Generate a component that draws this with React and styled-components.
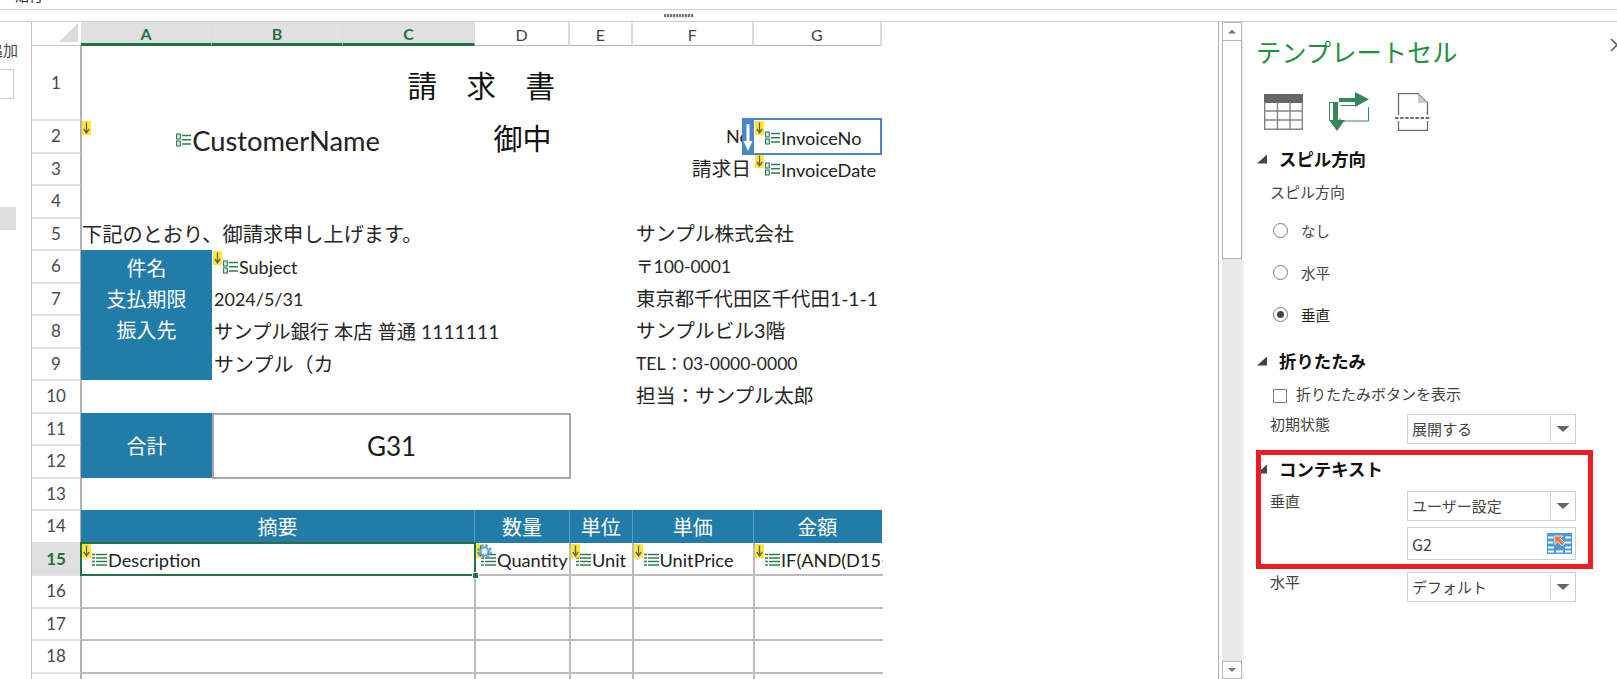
import React from "react";
import styled, { createGlobalStyle, css } from "styled-components";

const SHEET_FONT = `"Lato", "Noto Sans CJK JP", sans-serif`;
const PANEL_FONT = `"Noto Sans CJK JP", "Noto Sans", sans-serif`;
const BLUE = "#227caa";
const GREEN = "#217346";
const GRID = "#bcbcbc";

const Global = createGlobalStyle`
  html, body { margin: 0; padding: 0; background: #fff; overflow: hidden; }
  #root { width: 1617px; height: 679px; }
`;

const Page = styled.div`
  width: 1617px;
  height: 679px;
  display: flex;
  flex-direction: column;
  overflow: hidden;
  background: #fff;
`;

const TopBar = styled.div`
  height: 9px;
  overflow: hidden;
  border-bottom: 1px solid #cfcfcf;
  padding-left: 15px;
  font: 14px/14px ${PANEL_FONT};
  color: #222;
  & > span { display: block; margin-top: -12px; }
`;

const Splitter = styled.div`
  height: 11px;
  border-bottom: 1px solid #cfcfcf;
  display: flex;
  justify-content: center;
  align-items: center;
  padding-right: 260px;
`;

const Grip = styled.div`
  width: 30px;
  height: 3px;
  background: repeating-linear-gradient(90deg, #777 0 2px, #ddd 2px 3px);
`;

const Main = styled.div`
  flex: 1;
  display: flex;
  min-height: 0;
`;

const LeftStrip = styled.div`
  width: 31px;
  flex: none;
  border-right: 1px solid #c4c4c4;
  overflow: hidden;
  font: 15px/20px ${PANEL_FONT};
  color: #444;
  display: flex;
  flex-direction: column;
`;

const StripLabel = styled.div`
  margin: 18px 0 0 -12px;
  height: 20px;
  white-space: nowrap;
`;

const StripInput = styled.div`
  margin: 9px 0 0 -2px;
  width: 14px;
  height: 28px;
  border: 1px solid #cfcfcf;
`;

const StripTab = styled.div`
  margin-top: 108px;
  width: 16px;
  height: 23px;
  background: #dedede;
`;

const Sheet = styled.div`
  flex: none;
  display: grid;
  grid-template-columns: 49px 131px 131px 132px 95px 62.5px 121.5px 127.5px;
  grid-template-rows: 24px 74px repeat(18, 32.5px);
  align-self: flex-start;
  font-family: ${SHEET_FONT};
  color: #222;
  white-space: nowrap;
`;

const place = css`
  grid-column: ${(p) => p.$col} / span ${(p) => p.$span || 1};
  grid-row: ${(p) => p.$row + 1} / span ${(p) => p.$rows || 1};
`;

const Corner = styled.div`
  grid-column: 1;
  grid-row: 1;
  position: relative;
  border-bottom: 1px solid #c4c4c4;
  &::after {
    content: "";
    position: absolute;
    right: 3px;
    bottom: 3px;
    width: 19px;
    height: 19px;
    background: #dcdcdc;
    clip-path: polygon(100% 0, 100% 100%, 0 100%);
  }
`;

const ColHead = styled.div`
  grid-column: ${(p) => p.$col};
  grid-row: 1;
  display: flex;
  align-items: center;
  justify-content: center;
  font-size: 16px;
  box-sizing: border-box;
  padding-top: 1px;
  ${(p) =>
    p.$active
      ? css`
          background: #e0e0e0;
          color: ${GREEN};
          font-weight: 700;
          border-bottom: 3px solid ${GREEN};
          border-right: 1px solid #d6dfd9;
        `
      : css`
          color: #444;
          border-bottom: 1px solid #b5b5b5;
          border-right: 2px solid #dcdedc;
        `}
`;

const RowHead = styled.div`
  grid-column: 1;
  grid-row: ${(p) => p.$row + 1};
  display: flex;
  align-items: center;
  justify-content: center;
  box-sizing: border-box;
  font-size: 17px;
  color: #4a4a4a;
  margin: 0 -1px -1px 0;
  border-right: 2px solid #b2b2b2;
  border-bottom: 2px solid #e2e4e2;
  ${(p) =>
    p.$active &&
    css`
      background: #e0e0e0;
      color: ${GREEN};
      font-weight: 700;
    `}
`;

const Title = styled.div`
  ${place};
  display: flex;
  align-items: center;
  justify-content: center;
  font-size: 29.5px;
  color: #111;
  font-family: ${PANEL_FONT};
  padding-top: 1px;
`;

const Honorific = styled.div`
  ${place};
  display: flex;
  align-items: center;
  justify-content: center;
  font-size: 29px;
  color: #111;
  font-family: ${PANEL_FONT};
  padding-top: 2px;
  box-sizing: border-box;
`;

const Text = styled.div`
  ${place};
  display: flex;
  align-items: center;
  justify-content: ${(p) => (p.$right !== undefined ? "flex-end" : "flex-start")};
  box-sizing: border-box;
  padding: 0 ${(p) => p.$right ?? 0}px 0 ${(p) => (p.$right !== undefined ? 0 : p.$pad ?? 3)}px;
  font-size: ${(p) => p.$size || 19.8}px;
  line-height: 1;
  color: #262626;
`;

const Field = styled.div`
  ${place};
  position: relative;
  display: flex;
  align-items: center;
  justify-content: ${(p) => (p.$center ? "center" : "flex-start")};
  box-sizing: border-box;
  padding: ${(p) => p.$top ?? 2}px 0 0 ${(p) => p.$pad ?? 11}px;
  font-size: ${(p) => p.$size || 18.2}px;
  color: #222;
  ${(p) =>
    p.$grid &&
    css`
      margin: 0 -1px -1px 0;
      border-bottom: 2px solid ${GRID};
      border-right: ${p.$last ? "none" : `2px solid ${GRID}`};
      overflow: hidden;
    `}
  ${(p) =>
    p.$visible &&
    css`
      overflow: visible;
    `}
`;

const BlueBlock = styled.div`
  ${place};
  background: ${BLUE};
  color: #fff;
  font-family: ${PANEL_FONT};
  font-size: 20px;
  display: flex;
  flex-direction: column;
  align-items: center;
  justify-content: ${(p) => (p.$middle ? "center" : "flex-start")};
  padding-top: ${(p) => (p.$middle ? 0 : 2)}px;
`;

const BlueLine = styled.div`
  height: 31px;
  line-height: 31px;
`;

const TotalBox = styled.div`
  ${place};
  display: flex;
  align-items: center;
  justify-content: center;
  box-sizing: border-box;
  margin: 0 -1px -1px 0;
  border: 2px solid #a8a8a8;
  font-size: 26px;
  color: #1a1a1a;
`;

const TableHead = styled.div`
  ${place};
  background: ${BLUE};
  color: #fff;
  font-family: ${PANEL_FONT};
  font-size: 20px;
  display: flex;
  align-items: center;
  justify-content: center;
  box-sizing: border-box;
  border-right: 1px solid ${(p) => (p.$last ? BLUE : "#5c9cbc")};
`;

const EmptyCell = styled.div`
  ${place};
  box-sizing: border-box;
  margin: 0 -1px -1px 0;
  border-bottom: 2px solid ${GRID};
  border-right: ${(p) => (p.$last ? "none" : `2px solid ${GRID}`)};
`;

const Flag = styled.svg`
  position: absolute;
  left: ${(p) => p.$left ?? 1}px;
  top: 1px;
  width: 9px;
  height: 14px;
`;

const FieldGlyph = styled.svg`
  width: 15px;
  height: 14px;
  flex: none;
  margin-right: 1px;
  ${(p) => p.$up && "margin-top: -1px;"}
`;

const GearBadge = styled.svg`
  position: absolute;
  left: 2px;
  top: 1px;
  width: 15px;
  height: 15px;
`;

const InvoiceFrame = styled.div`
  position: absolute;
  left: -12px;
  right: 0;
  top: -2px;
  bottom: -2px;
  border: 2px solid #4a86c8;
  box-sizing: border-box;
  z-index: 2;
  pointer-events: none;
`;

const DragTab = styled.div`
  position: absolute;
  left: -2px;
  top: -2px;
  bottom: -2px;
  width: 12px;
  background: #4a86c8;
  display: flex;
  align-items: center;
  justify-content: center;
`;

const CellFrame = styled.div`
  position: absolute;
  left: -1px;
  right: -2px;
  top: -1px;
  bottom: -2px;
  border: 2px solid ${GREEN};
  box-sizing: border-box;
  z-index: 2;
  pointer-events: none;
`;

const FillHandle = styled.div`
  position: absolute;
  right: -5px;
  bottom: -5px;
  width: 7px;
  height: 7px;
  box-sizing: border-box;
  background: ${GREEN};
  border: 1px solid #fff;
`;

const Gap = styled.div`
  flex: none;
  width: 336.5px;
`;

const ScrollBar = styled.div`
  flex: none;
  width: 24px;
  box-sizing: border-box;
  border-left: 1px solid #b0b0b0;
  padding-left: 3px;
  display: flex;
  flex-direction: column;
  background: linear-gradient(90deg, #fff 3px, #e9e9e9 3px);
`;

const ScrollButton = styled.div`
  height: ${(p) => (p.$down ? 18 : 19)}px;
  flex: none;
  box-sizing: border-box;
  background: #fff;
  border: 1px solid #b8b8b8;
  display: flex;
  align-items: center;
  justify-content: center;
  &::after {
    content: "";
    width: 8px;
    height: 4px;
    background: #777;
    clip-path: ${(p) =>
      p.$down ? "polygon(0 0, 100% 0, 50% 100%)" : "polygon(50% 0, 100% 100%, 0 100%)"};
  }
`;

const ScrollThumb = styled.div`
  height: 218px;
  flex: none;
  box-sizing: border-box;
  background: #fff;
  border: 1px solid #b0b0b0;
  border-top: none;
`;

const ScrollTrack = styled.div`
  flex: 1;
`;

const Panel = styled.div`
  flex: 1;
  position: relative;
  overflow: hidden;
  box-sizing: border-box;
  padding: 14px 0 0 13px;
  font-family: ${PANEL_FONT};
  font-size: 15px;
  color: #444;
  display: flex;
  flex-direction: column;
  border-left: 2px solid #f3f3f3;
`;

const PanelTitle = styled.div`
  height: 30px;
  line-height: 30px;
  font-size: 25.3px;
  color: #1f9040;
  margin-left: -1px;
  white-space: nowrap;
`;

const CloseButton = styled.svg`
  position: absolute;
  right: -7px;
  top: 16px;
  width: 14px;
  height: 14px;
`;

const IconRow = styled.div`
  margin: 26px 0 0 7px;
  height: 40px;
  display: flex;
  align-items: center;
  gap: 26px;
`;

const SectionHead = styled.div`
  margin-top: ${(p) => p.$top ?? 0}px;
  height: 20px;
  display: flex;
  align-items: center;
  font-size: 17.4px;
  font-weight: 700;
  color: #111;
  line-height: 20px;
  &::before {
    content: "";
    width: 10px;
    height: 9px;
    margin-right: 12px;
    background: #444;
    clip-path: polygon(100% 0, 100% 100%, 0 100%);
  }
`;

const Label = styled.div`
  height: 20px;
  line-height: 20px;
  margin: ${(p) => p.$top ?? 0}px 0 0 13px;
`;

const RadioRow = styled.div`
  margin: ${(p) => p.$top}px 0 0 16px;
  height: 20px;
  display: flex;
  align-items: center;
  gap: 13px;
  font-size: 14.5px;
  color: ${(p) => (p.$checked ? "#222" : "#444")};
`;

const RadioDot = styled.span`
  width: 15px;
  height: 15px;
  flex: none;
  box-sizing: border-box;
  border: 1.5px solid #7a7a7a;
  border-radius: 50%;
  display: flex;
  align-items: center;
  justify-content: center;
  &::after {
    content: "";
    display: ${(p) => (p.$checked ? "block" : "none")};
    width: 7px;
    height: 7px;
    border-radius: 50%;
    background: #444;
  }
`;

const CheckRow = styled.div`
  margin: 12px 0 0 16px;
  height: 20px;
  display: flex;
  align-items: center;
  gap: 9px;
`;

const CheckBox = styled.span`
  width: 14px;
  height: 14px;
  flex: none;
  box-sizing: border-box;
  border: 1px solid #7a7a7a;
  margin-top: 6px;
`;

const FieldRow = styled.div`
  margin: ${(p) => p.$top}px 0 0 13px;
  display: grid;
  grid-template-columns: 137px 169px;
  align-items: start;
`;

const FieldLabel = styled.div`
  line-height: 20px;
`;

const SelectBox = styled.div`
  grid-column: 2;
  height: 30px;
  box-sizing: border-box;
  border: 1px solid #cfcfcf;
  display: flex;
  align-items: center;
  padding-left: 4px;
  line-height: 20px;
`;

const SelectValue = styled.span`
  flex: 1;
`;

const SelectCaret = styled.span`
  width: 24px;
  height: 26px;
  flex: none;
  border-left: 1px solid #cfcfcf;
  display: flex;
  align-items: center;
  justify-content: center;
  &::after {
    content: "";
    width: 13px;
    height: 6px;
    background: #666;
    clip-path: polygon(0 0, 100% 0, 50% 100%);
  }
`;

const RefBox = styled(SelectBox)`
  height: 33px;
  padding-right: 3px;
  font-size: 16px;
`;

const ContextSection = styled.section`
  position: relative;
  margin-top: 6px;
  padding: 9px 0;
  width: 336px;
`;

const Highlight = styled.div`
  position: absolute;
  left: -1px;
  top: 0;
  right: 0;
  bottom: 0;
  border: 5px solid #ed1c24;
  pointer-events: none;
`;

const columns = ["A", "B", "C", "D", "E", "F", "G"];
const rowNumbers = Array.from({ length: 19 }, (_, i) => i + 1);

const MarkerFlag = ({ left }) => (
  <Flag $left={left} viewBox="0 0 9 14">
    <rect width="9" height="14" fill="#ffe834" />
    <path d="M4.5 1.5v10M1.8 8l2.7 3.8L7.2 8" fill="none" stroke="#5f5f5f" strokeWidth="1.3" />
  </Flag>
);

const SingleGlyph = () => (
  <FieldGlyph $up viewBox="0 0 15 14">
    <g fill="#dcebe2" stroke="#2f7d52" strokeWidth="1.1">
      <rect x="0.5" y="1" width="3.8" height="5" />
      <rect x="0.5" y="8" width="3.8" height="5" />
    </g>
    <path d="M6 2.5h9M6 6.8h9M6 11h9" stroke="#2f7d52" strokeWidth="1.6" />
  </FieldGlyph>
);

const ListGlyph = () => (
  <FieldGlyph viewBox="0 0 15 14">
    <path
      d="M0 1.5h3M4 1.5h11M0 5h3M4 5h11M0 8.5h3M4 8.5h11M0 12h3M4 12h11"
      stroke="#2f7d52"
      strokeWidth="1.4"
    />
  </FieldGlyph>
);

const Gear = () => (
  <GearBadge viewBox="0 0 16 16">
    <circle cx="8" cy="8" r="6.6" fill="none" stroke="#5b9be0" strokeWidth="2.4" strokeDasharray="2.6 2.6" />
    <circle cx="8" cy="8" r="4.4" fill="#cfe3f8" stroke="#5b9be0" strokeWidth="2" />
    <circle cx="8" cy="8" r="1.6" fill="#fff" />
  </GearBadge>
);

const TableIcon = () => (
  <svg width="39" height="36" viewBox="0 0 39 36">
    <rect x="0" y="0" width="39" height="9" fill="#666" />
    <path
      d="M0.7 8v27.3h37.6V8M0.7 17h37.6M0.7 26h37.6M13.5 8v27M26 8v27"
      fill="none"
      stroke="#858585"
      strokeWidth="1.4"
    />
  </svg>
);

const SpillIcon = () => (
  <svg width="40" height="40" viewBox="0 0 40 40">
    <path d="M0.5 10.5v18M0.5 10.5h9M11.5 13.5h17M39.5 15v14H11v-3" fill="none" stroke="#37855a" strokeWidth="1" />
    <path d="M10 6h16V0l14 7.2L26 15v-5H10z" fill="#37855a" />
    <path d="M4 10h5v18h7L8 39 0 28h4z" fill="#37855a" />
  </svg>
);

const PageIcon = () => (
  <svg width="36" height="38" viewBox="0 0 36 38">
    <path d="M3.5 22V0.7H23L32.5 10v12M3.5 28v9.3h29V28" fill="none" stroke="#6f6f6f" strokeWidth="1.3" />
    <path d="M23 1v9h9.5z" fill="#c9c9c9" />
    <path d="M0 25h36" stroke="#6f6f6f" strokeWidth="2" strokeDasharray="3.5 1.6" />
  </svg>
);

const PickerIcon = () => (
  <svg width="25" height="21" viewBox="0 0 25 21">
    <rect width="25" height="21" fill="#4a9ade" />
    <path
      d="M1 4.5h5M1 9.5h5M1 14.5h6M1 18.5h6M18 4.5h6M18 9.5h6M18 14.5h6M18 18.5h6M9 18.5h7"
      stroke="#fff"
      strokeWidth="2"
    />
    <path
      d="M7 3h9l-2.6 2.6L18 10l-3 3-4.4-4.4L8 11.5z"
      fill="#f47b3f"
      stroke="#fff"
      strokeWidth="0.8"
    />
  </svg>
);

export default function App() {
  return (
    <Page>
      <Global />
      <TopBar>
        <span>貼付</span>
      </TopBar>
      <Splitter>
        <Grip />
      </Splitter>
      <Main>
        <LeftStrip>
          <StripLabel>追加</StripLabel>
          <StripInput />
          <StripTab />
        </LeftStrip>
        <Sheet>
          <Corner />
          {columns.map((c, i) => (
            <ColHead key={c} $col={i + 2} $active={i < 3}>
              {c}
            </ColHead>
          ))}
          {rowNumbers.map((n) => (
            <RowHead key={n} $row={n} $active={n === 15}>
              {n < 19 ? n : ""}
            </RowHead>
          ))}

          <Title $col={2} $span={7} $row={1}>
            請　求　書
          </Title>

          <Field $col={2} $span={3} $row={2} $center $pad={0} $size={27.3} $top={9}>
            <MarkerFlag />
            <SingleGlyph />
            CustomerName
          </Field>
          <Honorific $col={5} $row={2}>
            御中
          </Honorific>
          <Text $col={7} $row={2} $right={0} $size={18}>
            No.
          </Text>
          <Field $col={8} $row={2} $top={4}>
            <MarkerFlag />
            <SingleGlyph />
            InvoiceNo
            <InvoiceFrame>
              <DragTab>
                <svg width="10" height="32" viewBox="0 0 10 32">
                  <path d="M3.5 4h3v17h3L5 31 0.5 21h3z" fill="#fff" />
                </svg>
              </DragTab>
            </InvoiceFrame>
          </Field>
          <Text $col={7} $row={3} $right={3}>
            請求日
          </Text>
          <Field $col={8} $row={3}>
            <MarkerFlag />
            <SingleGlyph />
            InvoiceDate
          </Field>

          <Text $col={2} $span={3} $row={5} $size={20.2} $pad={1}>
            下記のとおり、御請求申し上げます。
          </Text>
          <Text $col={7} $span={2} $row={5} $pad={3.5}>
            サンプル株式会社
          </Text>

          <BlueBlock $col={2} $row={6} $rows={4}>
            <BlueLine>件名</BlueLine>
            <BlueLine>支払期限</BlueLine>
            <BlueLine>振入先</BlueLine>
          </BlueBlock>

          <Field $col={3} $span={2} $row={6} $size={18} $pad={11}>
            <MarkerFlag />
            <SingleGlyph />
            Subject
          </Field>
          <Text $col={7} $span={2} $row={6} $pad={3.5} $size={17.5}>
            〒100-0001
          </Text>
          <Text $col={3} $span={2} $row={7} $size={18} $pad={2}>
            2024/5/31
          </Text>
          <Text $col={7} $span={2} $row={7} $pad={3.5} $size={19.4}>
            東京都千代田区千代田1-1-1
          </Text>
          <Text $col={3} $span={3} $row={8} $pad={2} $size={19.3}>
            サンプル銀行 本店 普通 1111111
          </Text>
          <Text $col={7} $span={2} $row={8} $pad={3.5}>
            サンプルビル3階
          </Text>
          <Text $col={3} $span={2} $row={9} $pad={2} $size={20}>
            サンプル（カ
          </Text>
          <Text $col={7} $span={2} $row={9} $pad={3.5} $size={17.5}>
            TEL：03-0000-0000
          </Text>
          <Text $col={7} $span={2} $row={10} $pad={3.5}>
            担当：サンプル太郎
          </Text>

          <BlueBlock $col={2} $row={11} $rows={2} $middle>
            合計
          </BlueBlock>
          <TotalBox $col={3} $span={3} $row={11} $rows={2}>
            G31
          </TotalBox>

          <TableHead $col={2} $span={3} $row={14}>
            摘要
          </TableHead>
          <TableHead $col={5} $row={14}>
            数量
          </TableHead>
          <TableHead $col={6} $row={14}>
            単位
          </TableHead>
          <TableHead $col={7} $row={14}>
            単価
          </TableHead>
          <TableHead $col={8} $row={14} $last>
            金額
          </TableHead>

          <Field $col={2} $span={3} $row={15} $grid $visible $top={3}>
            <MarkerFlag />
            <ListGlyph />
            Description
            <CellFrame>
              <FillHandle />
            </CellFrame>
          </Field>
          <Field $col={5} $row={15} $grid $pad={6} $top={3}>
            <MarkerFlag />
            <Gear />
            <ListGlyph />
            Quantity
          </Field>
          <Field $col={6} $row={15} $grid $pad={6} $top={3}>
            <MarkerFlag />
            <ListGlyph />
            Unit
          </Field>
          <Field $col={7} $row={15} $grid $top={3}>
            <MarkerFlag />
            <ListGlyph />
            UnitPrice
          </Field>
          <Field $col={8} $row={15} $grid $last $top={3}>
            <MarkerFlag />
            <ListGlyph />
            IF(AND(D15&lt;
          </Field>

          {[16, 17, 18, 19].map((r) => (
            <React.Fragment key={r}>
              <EmptyCell $col={2} $span={3} $row={r} />
              <EmptyCell $col={5} $row={r} />
              <EmptyCell $col={6} $row={r} />
              <EmptyCell $col={7} $row={r} />
              <EmptyCell $col={8} $row={r} $last />
            </React.Fragment>
          ))}
        </Sheet>
        <Gap />
        <ScrollBar>
          <ScrollButton />
          <ScrollThumb />
          <ScrollTrack />
          <ScrollButton $down />
        </ScrollBar>
        <Panel>
          <PanelTitle>テンプレートセル</PanelTitle>
          <CloseButton viewBox="0 0 14 14">
            <path d="M1 1l12 12M13 1L1 13" stroke="#666" strokeWidth="1.6" />
          </CloseButton>
          <IconRow>
            <TableIcon />
            <SpillIcon />
            <PageIcon />
          </IconRow>

          <SectionHead $top={17}>スピル方向</SectionHead>
          <Label $top={13}>スピル方向</Label>
          <RadioRow $top={18}>
            <RadioDot />
            なし
          </RadioRow>
          <RadioRow $top={22}>
            <RadioDot />
            水平
          </RadioRow>
          <RadioRow $top={22} $checked>
            <RadioDot $checked />
            垂直
          </RadioRow>

          <SectionHead $top={27}>折りたたみ</SectionHead>
          <CheckRow>
            <CheckBox />
            折りたたみボタンを表示
          </CheckRow>
          <FieldRow $top={11}>
            <FieldLabel>初期状態</FieldLabel>
            <SelectBox>
              <SelectValue>展開する</SelectValue>
              <SelectCaret />
            </SelectBox>
          </FieldRow>

          <ContextSection>
            <SectionHead>コンテキスト</SectionHead>
            <FieldRow $top={12}>
              <FieldLabel>垂直</FieldLabel>
              <SelectBox>
                <SelectValue>ユーザー設定</SelectValue>
                <SelectCaret />
              </SelectBox>
            </FieldRow>
            <FieldRow $top={6}>
              <RefBox>
                <SelectValue>G2</SelectValue>
                <PickerIcon />
              </RefBox>
            </FieldRow>
            <Highlight />
          </ContextSection>

          <FieldRow $top={3}>
            <FieldLabel>水平</FieldLabel>
            <SelectBox>
              <SelectValue>デフォルト</SelectValue>
              <SelectCaret />
            </SelectBox>
          </FieldRow>
        </Panel>
      </Main>
    </Page>
  );
}
